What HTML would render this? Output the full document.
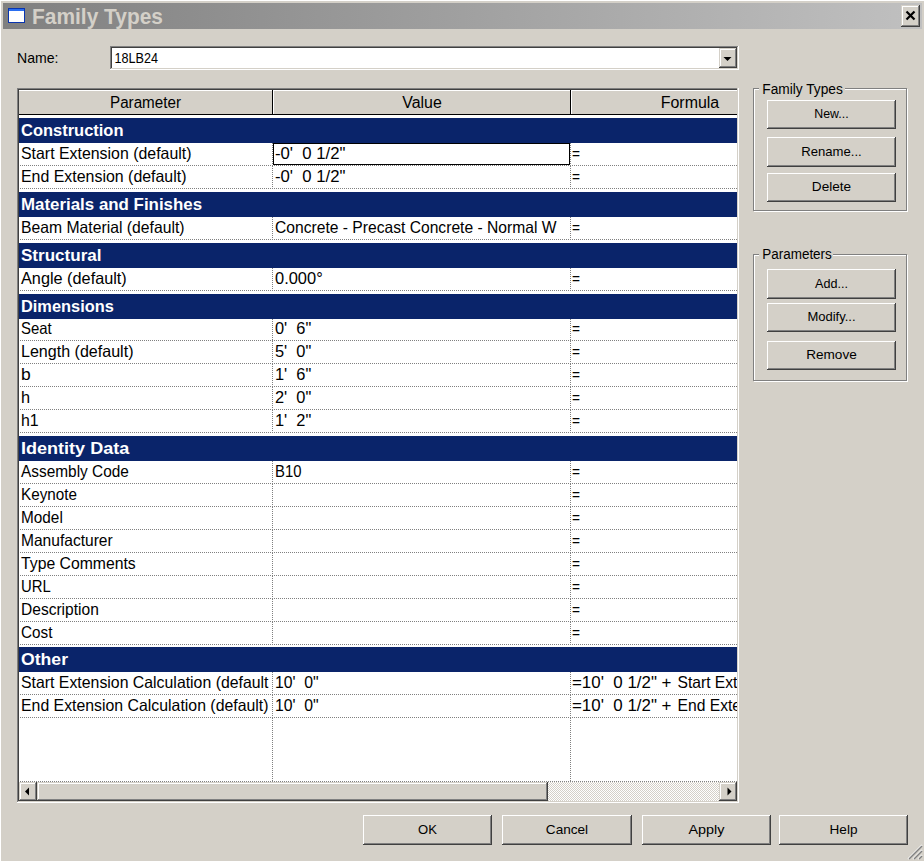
<!DOCTYPE html>
<html><head><meta charset="utf-8"><title>Family Types</title>
<style>
html,body{margin:0;padding:0;background:#d4d0c8;width:924px;height:861px;overflow:hidden}
svg{display:block;font-family:"Liberation Sans",sans-serif} text{white-space:pre}
</style></head><body>
<svg width="924" height="861" viewBox="0 0 924 861" shape-rendering="crispEdges">
<rect x="0" y="0" width="924" height="861" fill="#d4d0c8"/>
<rect x="0" y="0" width="924" height="1" fill="#ffffff"/>
<rect x="0" y="0" width="1" height="861" fill="#ffffff"/>
<defs><linearGradient id="tg" x1="0" x2="1" y1="0" y2="0"><stop offset="0" stop-color="#808080"/><stop offset="1" stop-color="#c0c0c0"/></linearGradient></defs>
<rect x="3" y="3" width="919" height="26" fill="url(#tg)"/>
<rect x="8" y="8" width="17" height="15" fill="#0834b0"/>
<rect x="9" y="9" width="15" height="2" fill="#2a6ef0"/>
<rect x="9" y="11" width="15" height="11" fill="#ffffff"/>
<text x="32" y="23.5" font-size="21.5" font-weight="700" fill="#d4d0c8" textLength="131" lengthAdjust="spacingAndGlyphs">Family Types</text>
<rect x="901" y="5" width="19" height="22" fill="#404040"/>
<rect x="901" y="5" width="18" height="21" fill="#d4d0c8"/>
<rect x="902" y="6" width="17" height="20" fill="#808080"/>
<rect x="902" y="6" width="16" height="19" fill="#ffffff"/>
<rect x="903" y="7" width="15" height="18" fill="#d4d0c8"/>
<path d="M906.5 11.5 L914.5 19.5 M914.5 11.5 L906.5 19.5" stroke="#000" stroke-width="2.2" fill="none" shape-rendering="geometricPrecision"/>
<text x="17" y="62.7" font-size="14.5" fill="#000" textLength="41.5" lengthAdjust="spacingAndGlyphs">Name:</text>
<rect x="110" y="46" width="629" height="24" fill="#ffffff"/>
<rect x="110" y="46" width="628" height="23" fill="#808080"/>
<rect x="111" y="47" width="627" height="22" fill="#d4d0c8"/>
<rect x="111" y="47" width="626" height="21" fill="#404040"/>
<rect x="112" y="48" width="625" height="20" fill="#ffffff"/>
<rect x="719" y="48" width="18" height="20" fill="#404040"/>
<rect x="719" y="48" width="17" height="19" fill="#d4d0c8"/>
<rect x="720" y="49" width="16" height="18" fill="#808080"/>
<rect x="720" y="49" width="15" height="17" fill="#ffffff"/>
<rect x="721" y="50" width="14" height="16" fill="#d4d0c8"/>
<path d="M723.5 57 L731.5 57 L727.5 61 Z" fill="#000" shape-rendering="geometricPrecision"/>
<text x="114.5" y="62.9" font-size="14.5" fill="#000" textLength="43.5" lengthAdjust="spacingAndGlyphs">18LB24</text>
<rect x="754" y="89" width="154" height="123" fill="#ffffff"/>
<rect x="753" y="88" width="154" height="123" fill="#808080"/>
<rect x="754" y="89" width="152" height="121" fill="#ffffff"/>
<rect x="755" y="90" width="151" height="120" fill="#d4d0c8"/>
<rect x="759" y="82" width="86" height="10" fill="#d4d0c8"/>
<text x="762.3" y="93.6" font-size="14" fill="#000" textLength="80.5" lengthAdjust="spacingAndGlyphs">Family Types</text>
<rect x="754" y="255" width="154" height="127" fill="#ffffff"/>
<rect x="753" y="254" width="154" height="127" fill="#808080"/>
<rect x="754" y="255" width="152" height="125" fill="#ffffff"/>
<rect x="755" y="256" width="151" height="124" fill="#d4d0c8"/>
<rect x="759" y="248" width="74" height="10" fill="#d4d0c8"/>
<text x="762.3" y="258.8" font-size="14" fill="#000" textLength="69.5" lengthAdjust="spacingAndGlyphs">Parameters</text>
<rect x="767" y="100" width="129" height="29" fill="#404040"/>
<rect x="767" y="100" width="128" height="28" fill="#ffffff"/>
<rect x="768" y="101" width="127" height="27" fill="#808080"/>
<rect x="768" y="101" width="126" height="26" fill="#d4d0c8"/>
<text x="831.5" y="118.3" font-size="13" fill="#000" textLength="34.3" lengthAdjust="spacingAndGlyphs" text-anchor="middle">New...</text>
<rect x="767" y="137" width="129" height="30" fill="#404040"/>
<rect x="767" y="137" width="128" height="29" fill="#ffffff"/>
<rect x="768" y="138" width="127" height="28" fill="#808080"/>
<rect x="768" y="138" width="126" height="27" fill="#d4d0c8"/>
<text x="831.5" y="155.8" font-size="13" fill="#000" textLength="60.5" lengthAdjust="spacingAndGlyphs" text-anchor="middle">Rename...</text>
<rect x="767" y="173" width="129" height="29" fill="#404040"/>
<rect x="767" y="173" width="128" height="28" fill="#ffffff"/>
<rect x="768" y="174" width="127" height="27" fill="#808080"/>
<rect x="768" y="174" width="126" height="26" fill="#d4d0c8"/>
<text x="831.5" y="191.3" font-size="13" fill="#000" textLength="39.3" lengthAdjust="spacingAndGlyphs" text-anchor="middle">Delete</text>
<rect x="767" y="269" width="129" height="30" fill="#404040"/>
<rect x="767" y="269" width="128" height="29" fill="#ffffff"/>
<rect x="768" y="270" width="127" height="28" fill="#808080"/>
<rect x="768" y="270" width="126" height="27" fill="#d4d0c8"/>
<text x="831.5" y="287.8" font-size="13" fill="#000" textLength="32.9" lengthAdjust="spacingAndGlyphs" text-anchor="middle">Add...</text>
<rect x="767" y="303" width="129" height="29" fill="#404040"/>
<rect x="767" y="303" width="128" height="28" fill="#ffffff"/>
<rect x="768" y="304" width="127" height="27" fill="#808080"/>
<rect x="768" y="304" width="126" height="26" fill="#d4d0c8"/>
<text x="831.5" y="321.3" font-size="13" fill="#000" textLength="48.2" lengthAdjust="spacingAndGlyphs" text-anchor="middle">Modify...</text>
<rect x="767" y="341" width="129" height="29" fill="#404040"/>
<rect x="767" y="341" width="128" height="28" fill="#ffffff"/>
<rect x="768" y="342" width="127" height="27" fill="#808080"/>
<rect x="768" y="342" width="126" height="26" fill="#d4d0c8"/>
<text x="831.5" y="359.3" font-size="13" fill="#000" textLength="50.6" lengthAdjust="spacingAndGlyphs" text-anchor="middle">Remove</text>
<rect x="363" y="815" width="129" height="30" fill="#404040"/>
<rect x="363" y="815" width="128" height="29" fill="#ffffff"/>
<rect x="364" y="816" width="127" height="28" fill="#808080"/>
<rect x="364" y="816" width="126" height="27" fill="#d4d0c8"/>
<text x="427.5" y="833.8" font-size="13" fill="#000" textLength="18.9" lengthAdjust="spacingAndGlyphs" text-anchor="middle">OK</text>
<rect x="502" y="815" width="130" height="30" fill="#404040"/>
<rect x="502" y="815" width="129" height="29" fill="#ffffff"/>
<rect x="503" y="816" width="128" height="28" fill="#808080"/>
<rect x="503" y="816" width="127" height="27" fill="#d4d0c8"/>
<text x="567.0" y="833.8" font-size="13" fill="#000" textLength="42.3" lengthAdjust="spacingAndGlyphs" text-anchor="middle">Cancel</text>
<rect x="642" y="815" width="129" height="30" fill="#404040"/>
<rect x="642" y="815" width="128" height="29" fill="#ffffff"/>
<rect x="643" y="816" width="127" height="28" fill="#808080"/>
<rect x="643" y="816" width="126" height="27" fill="#d4d0c8"/>
<text x="706.5" y="833.8" font-size="13" fill="#000" textLength="36" lengthAdjust="spacingAndGlyphs" text-anchor="middle">Apply</text>
<rect x="779" y="815" width="129" height="30" fill="#404040"/>
<rect x="779" y="815" width="128" height="29" fill="#ffffff"/>
<rect x="780" y="816" width="127" height="28" fill="#808080"/>
<rect x="780" y="816" width="126" height="27" fill="#d4d0c8"/>
<text x="843.5" y="833.8" font-size="13" fill="#000" textLength="27.9" lengthAdjust="spacingAndGlyphs" text-anchor="middle">Help</text>
<path d="M908 859 L922 845" stroke="#ffffff" stroke-width="1.2" shape-rendering="geometricPrecision"/>
<path d="M909 859 L922 846" stroke="#808080" stroke-width="1.4" shape-rendering="geometricPrecision"/>
<path d="M913 859 L922 850" stroke="#ffffff" stroke-width="1.2" shape-rendering="geometricPrecision"/>
<path d="M914 859 L922 851" stroke="#808080" stroke-width="1.4" shape-rendering="geometricPrecision"/>
<path d="M918 859 L922 855" stroke="#ffffff" stroke-width="1.2" shape-rendering="geometricPrecision"/>
<path d="M919 859 L922 856" stroke="#808080" stroke-width="1.4" shape-rendering="geometricPrecision"/>
<rect x="17" y="88" width="722" height="715" fill="#ffffff"/>
<rect x="17" y="88" width="721" height="714" fill="#808080"/>
<rect x="18" y="89" width="720" height="713" fill="#d4d0c8"/>
<rect x="18" y="89" width="719" height="712" fill="#404040"/>
<rect x="19" y="90" width="718" height="711" fill="#ffffff"/>
<rect x="19" y="90" width="718" height="25" fill="#000000"/>
<rect x="19" y="90" width="718" height="24" fill="#ffffff"/>
<rect x="19" y="91" width="718" height="23" fill="#d4d0c8"/>
<rect x="272" y="90" width="1" height="25" fill="#000000"/>
<rect x="273" y="91" width="1" height="23" fill="#ffffff"/>
<rect x="570" y="90" width="1" height="25" fill="#000000"/>
<rect x="571" y="91" width="1" height="23" fill="#ffffff"/>
<text x="145.5" y="108" font-size="16" fill="#000" textLength="71" lengthAdjust="spacingAndGlyphs" text-anchor="middle">Parameter</text>
<text x="422" y="108" font-size="16" fill="#000" textLength="39.5" lengthAdjust="spacingAndGlyphs" text-anchor="middle">Value</text>
<text x="690" y="108" font-size="16" fill="#000" textLength="58.5" lengthAdjust="spacingAndGlyphs" text-anchor="middle">Formula</text>
<rect x="19" y="118" width="718" height="25" fill="#0a246a"/>
<text x="21" y="136" font-size="16.5" font-weight="700" fill="#ffffff" textLength="102.5" lengthAdjust="spacingAndGlyphs">Construction</text>
<rect x="19" y="192" width="718" height="25" fill="#0a246a"/>
<text x="21" y="210" font-size="16.5" font-weight="700" fill="#ffffff" textLength="181.1" lengthAdjust="spacingAndGlyphs">Materials and Finishes</text>
<rect x="19" y="243" width="718" height="25" fill="#0a246a"/>
<text x="21" y="261" font-size="16.5" font-weight="700" fill="#ffffff" textLength="80.5" lengthAdjust="spacingAndGlyphs">Structural</text>
<rect x="19" y="294" width="718" height="25" fill="#0a246a"/>
<text x="21" y="312" font-size="16.5" font-weight="700" fill="#ffffff" textLength="92.8" lengthAdjust="spacingAndGlyphs">Dimensions</text>
<rect x="19" y="436" width="718" height="25" fill="#0a246a"/>
<text x="21" y="454" font-size="16.5" font-weight="700" fill="#ffffff" textLength="108.3" lengthAdjust="spacingAndGlyphs">Identity Data</text>
<rect x="19" y="647" width="718" height="25" fill="#0a246a"/>
<text x="21" y="665" font-size="16.5" font-weight="700" fill="#ffffff" textLength="47.0" lengthAdjust="spacingAndGlyphs">Other</text>
<defs><clipPath id="fclip"><rect x="571" y="100" width="166" height="700"/></clipPath></defs>
<text x="21" y="159" font-size="16.5" fill="#000" textLength="170.5" lengthAdjust="spacingAndGlyphs">Start Extension (default)</text>
<text x="275" y="159" font-size="16.5" fill="#000" textLength="70.5" lengthAdjust="spacingAndGlyphs">-0'  0 1/2&quot;</text>
<text x="572" y="159" font-size="16.5" fill="#000" textLength="8" lengthAdjust="spacingAndGlyphs">=</text>
<text x="21" y="182" font-size="16.5" fill="#000" textLength="165.5" lengthAdjust="spacingAndGlyphs">End Extension (default)</text>
<text x="275" y="182" font-size="16.5" fill="#000" textLength="70.5" lengthAdjust="spacingAndGlyphs">-0'  0 1/2&quot;</text>
<text x="572" y="182" font-size="16.5" fill="#000" textLength="8" lengthAdjust="spacingAndGlyphs">=</text>
<text x="21" y="233" font-size="16.5" fill="#000" textLength="163.5" lengthAdjust="spacingAndGlyphs">Beam Material (default)</text>
<text x="275" y="233" font-size="16.5" fill="#000" textLength="281.5" lengthAdjust="spacingAndGlyphs">Concrete - Precast Concrete - Normal W</text>
<text x="572" y="233" font-size="16.5" fill="#000" textLength="8" lengthAdjust="spacingAndGlyphs">=</text>
<text x="21" y="284" font-size="16.5" fill="#000" textLength="105.8" lengthAdjust="spacingAndGlyphs">Angle (default)</text>
<text x="275" y="284" font-size="16.5" fill="#000" textLength="47.7" lengthAdjust="spacingAndGlyphs">0.000°</text>
<text x="572" y="284" font-size="16.5" fill="#000" textLength="8" lengthAdjust="spacingAndGlyphs">=</text>
<text x="21" y="334" font-size="16.5" fill="#000" textLength="30.7" lengthAdjust="spacingAndGlyphs">Seat</text>
<text x="275" y="334" font-size="16.5" fill="#000" textLength="36.3" lengthAdjust="spacingAndGlyphs">0'  6&quot;</text>
<text x="572" y="334" font-size="16.5" fill="#000" textLength="8" lengthAdjust="spacingAndGlyphs">=</text>
<text x="21" y="357" font-size="16.5" fill="#000" textLength="112.5" lengthAdjust="spacingAndGlyphs">Length (default)</text>
<text x="275" y="357" font-size="16.5" fill="#000" textLength="36.3" lengthAdjust="spacingAndGlyphs">5'  0&quot;</text>
<text x="572" y="357" font-size="16.5" fill="#000" textLength="8" lengthAdjust="spacingAndGlyphs">=</text>
<text x="21" y="380" font-size="16.5" fill="#000" textLength="9.7" lengthAdjust="spacingAndGlyphs">b</text>
<text x="275" y="380" font-size="16.5" fill="#000" textLength="36.3" lengthAdjust="spacingAndGlyphs">1'  6&quot;</text>
<text x="572" y="380" font-size="16.5" fill="#000" textLength="8" lengthAdjust="spacingAndGlyphs">=</text>
<text x="21" y="403" font-size="16.5" fill="#000" textLength="9.1" lengthAdjust="spacingAndGlyphs">h</text>
<text x="275" y="403" font-size="16.5" fill="#000" textLength="36.3" lengthAdjust="spacingAndGlyphs">2'  0&quot;</text>
<text x="572" y="403" font-size="16.5" fill="#000" textLength="8" lengthAdjust="spacingAndGlyphs">=</text>
<text x="21" y="426" font-size="16.5" fill="#000" textLength="17.7" lengthAdjust="spacingAndGlyphs">h1</text>
<text x="275" y="426" font-size="16.5" fill="#000" textLength="36.3" lengthAdjust="spacingAndGlyphs">1'  2&quot;</text>
<text x="572" y="426" font-size="16.5" fill="#000" textLength="8" lengthAdjust="spacingAndGlyphs">=</text>
<text x="21" y="477" font-size="16.5" fill="#000" textLength="107.9" lengthAdjust="spacingAndGlyphs">Assembly Code</text>
<text x="275" y="477" font-size="16.5" fill="#000" textLength="26.4" lengthAdjust="spacingAndGlyphs">B10</text>
<text x="572" y="477" font-size="16.5" fill="#000" textLength="8" lengthAdjust="spacingAndGlyphs">=</text>
<text x="21" y="500" font-size="16.5" fill="#000" textLength="55.9" lengthAdjust="spacingAndGlyphs">Keynote</text>
<text x="572" y="500" font-size="16.5" fill="#000" textLength="8" lengthAdjust="spacingAndGlyphs">=</text>
<text x="21" y="523" font-size="16.5" fill="#000" textLength="41.8" lengthAdjust="spacingAndGlyphs">Model</text>
<text x="572" y="523" font-size="16.5" fill="#000" textLength="8" lengthAdjust="spacingAndGlyphs">=</text>
<text x="21" y="546" font-size="16.5" fill="#000" textLength="91.7" lengthAdjust="spacingAndGlyphs">Manufacturer</text>
<text x="572" y="546" font-size="16.5" fill="#000" textLength="8" lengthAdjust="spacingAndGlyphs">=</text>
<text x="21" y="569" font-size="16.5" fill="#000" textLength="114.7" lengthAdjust="spacingAndGlyphs">Type Comments</text>
<text x="572" y="569" font-size="16.5" fill="#000" textLength="8" lengthAdjust="spacingAndGlyphs">=</text>
<text x="21" y="592" font-size="16.5" fill="#000" textLength="29.8" lengthAdjust="spacingAndGlyphs">URL</text>
<text x="572" y="592" font-size="16.5" fill="#000" textLength="8" lengthAdjust="spacingAndGlyphs">=</text>
<text x="21" y="615" font-size="16.5" fill="#000" textLength="77.8" lengthAdjust="spacingAndGlyphs">Description</text>
<text x="572" y="615" font-size="16.5" fill="#000" textLength="8" lengthAdjust="spacingAndGlyphs">=</text>
<text x="21" y="638" font-size="16.5" fill="#000" textLength="31.4" lengthAdjust="spacingAndGlyphs">Cost</text>
<text x="572" y="638" font-size="16.5" fill="#000" textLength="8" lengthAdjust="spacingAndGlyphs">=</text>
<text x="21" y="688" font-size="16.5" fill="#000" textLength="247.5" lengthAdjust="spacingAndGlyphs">Start Extension Calculation (default</text>
<text x="275" y="688" font-size="16.5" fill="#000" textLength="43.7" lengthAdjust="spacingAndGlyphs">10'  0&quot;</text>
<text x="572" y="688" font-size="16.5" fill="#000" textLength="99.5" lengthAdjust="spacingAndGlyphs">=10'  0 1/2&quot; +</text>
<text x="677.5" y="688" font-size="16.5" fill="#000" textLength="106" lengthAdjust="spacingAndGlyphs" clip-path="url(#fclip)">Start Extension</text>
<text x="21" y="711" font-size="16.5" fill="#000" textLength="247.5" lengthAdjust="spacingAndGlyphs">End Extension Calculation (default)</text>
<text x="275" y="711" font-size="16.5" fill="#000" textLength="43.7" lengthAdjust="spacingAndGlyphs">10'  0&quot;</text>
<text x="572" y="711" font-size="16.5" fill="#000" textLength="99.5" lengthAdjust="spacingAndGlyphs">=10'  0 1/2&quot; +</text>
<text x="677.5" y="711" font-size="16.5" fill="#000" textLength="101" lengthAdjust="spacingAndGlyphs" clip-path="url(#fclip)">End Extension</text>
<g stroke="#808080" stroke-width="1" stroke-dasharray="1 1" fill="none"><path d="M20 165.5 H737" /><path d="M272.5 143 V165" /><path d="M570.5 143 V165" /><path d="M20 188.5 H737" /><path d="M272.5 166 V188" /><path d="M570.5 166 V188" /><path d="M20 239.5 H737" /><path d="M272.5 217 V239" /><path d="M570.5 217 V239" /><path d="M20 290.5 H737" /><path d="M272.5 268 V290" /><path d="M570.5 268 V290" /><path d="M20 340.5 H737" /><path d="M272.5 319 V340" /><path d="M570.5 319 V340" /><path d="M20 363.5 H737" /><path d="M272.5 341 V363" /><path d="M570.5 341 V363" /><path d="M20 386.5 H737" /><path d="M272.5 364 V386" /><path d="M570.5 364 V386" /><path d="M20 409.5 H737" /><path d="M272.5 387 V409" /><path d="M570.5 387 V409" /><path d="M20 432.5 H737" /><path d="M272.5 410 V432" /><path d="M570.5 410 V432" /><path d="M20 483.5 H737" /><path d="M272.5 461 V483" /><path d="M570.5 461 V483" /><path d="M20 506.5 H737" /><path d="M272.5 484 V506" /><path d="M570.5 484 V506" /><path d="M20 529.5 H737" /><path d="M272.5 507 V529" /><path d="M570.5 507 V529" /><path d="M20 552.5 H737" /><path d="M272.5 530 V552" /><path d="M570.5 530 V552" /><path d="M20 575.5 H737" /><path d="M272.5 553 V575" /><path d="M570.5 553 V575" /><path d="M20 598.5 H737" /><path d="M272.5 576 V598" /><path d="M570.5 576 V598" /><path d="M20 621.5 H737" /><path d="M272.5 599 V621" /><path d="M570.5 599 V621" /><path d="M20 644.5 H737" /><path d="M272.5 622 V644" /><path d="M570.5 622 V644" /><path d="M20 694.5 H737" /><path d="M272.5 672 V694" /><path d="M570.5 672 V694" /><path d="M20 717.5 H737" /><path d="M272.5 695 V717" /><path d="M570.5 695 V717" /><path d="M20 781.5 H737" /><path d="M272.5 718 V781" /><path d="M570.5 718 V781" /></g>
<rect x="273.5" y="143.5" width="296" height="21" fill="none" stroke="#000" stroke-width="1"/>
<rect x="19" y="782" width="718" height="19" fill="#d4d0c8"/>
<defs><pattern id="chk" x="0" y="0" width="2" height="2" patternUnits="userSpaceOnUse"><rect width="2" height="2" fill="#ffffff"/><rect width="1" height="1" fill="#d4d0c8"/><rect x="1" y="1" width="1" height="1" fill="#d4d0c8"/></pattern></defs>
<rect x="548" y="782" width="172" height="19" fill="url(#chk)"/>
<rect x="19" y="782" width="18" height="19" fill="#404040"/>
<rect x="19" y="782" width="17" height="18" fill="#d4d0c8"/>
<rect x="20" y="783" width="16" height="17" fill="#808080"/>
<rect x="20" y="783" width="15" height="16" fill="#ffffff"/>
<rect x="21" y="784" width="14" height="15" fill="#d4d0c8"/>
<path d="M29 787.5 V795.5 L25 791.5 Z" fill="#000" shape-rendering="geometricPrecision"/>
<rect x="37" y="782" width="511" height="19" fill="#404040"/>
<rect x="37" y="782" width="510" height="18" fill="#d4d0c8"/>
<rect x="38" y="783" width="509" height="17" fill="#808080"/>
<rect x="38" y="783" width="508" height="16" fill="#ffffff"/>
<rect x="39" y="784" width="507" height="15" fill="#d4d0c8"/>
<rect x="719" y="782" width="18" height="19" fill="#404040"/>
<rect x="719" y="782" width="17" height="18" fill="#d4d0c8"/>
<rect x="720" y="783" width="16" height="17" fill="#808080"/>
<rect x="720" y="783" width="15" height="16" fill="#ffffff"/>
<rect x="721" y="784" width="14" height="15" fill="#d4d0c8"/>
<path d="M727.5 787.5 V795.5 L731.5 791.5 Z" fill="#000" shape-rendering="geometricPrecision"/>
<rect x="737" y="88" width="1" height="714" fill="#d4d0c8"/>
<rect x="738" y="88" width="1" height="715" fill="#ffffff"/>
</svg>
</body></html>
